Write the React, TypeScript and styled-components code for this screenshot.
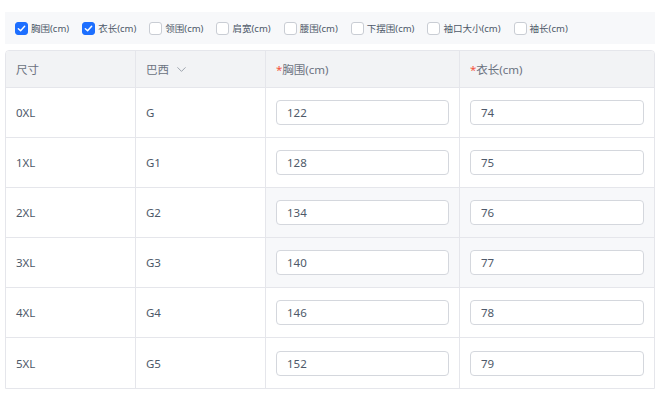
import React from 'react';
import styled, { createGlobalStyle } from 'styled-components';
import { ChevronDown } from 'lucide-react';

const GlobalStyle = createGlobalStyle`
	html, body {
		margin: 0;
		padding: 0;
		background: #ffffff;
	}

	body {
		font-family: "Noto Sans", "Noto Sans CJK SC", sans-serif;
		color: #4e5969;
	}

	* {
		box-sizing: border-box;
	}
`;

const Page = styled.div`
	width: 660px;
	padding: 12px 5px 0;
`;

const Toolbar = styled.div`
	display: flex;
	align-items: center;
	gap: 13px;
	height: 32px;
	padding-left: 10px;
	margin-bottom: 6px;
	background: #f7f8fa;
`;

const CheckItem = styled.label`
	display: flex;
	align-items: center;
	gap: 3px;
	font-size: 9.5px;
	color: #4e5969;
	white-space: nowrap;
`;

const Box = styled.span<{ $checked?: boolean }>`
	display: flex;
	align-items: center;
	justify-content: center;
	width: 13px;
	height: 13px;
	border-radius: 3px;
	border: 1px solid ${ p => p.$checked ? '#1d6fff' : '#c9cdd4' };
	background: ${ p => p.$checked ? '#1d6fff' : '#ffffff' };
`;

const Table = styled.div`
	display: grid;
	grid-template-columns: 130px 130px 194px 1fr;
	border: 1px solid #e5e6eb;
	border-radius: 4px 4px 0 0;
	overflow: hidden;
`;

const HeadCell = styled.div<{ $last?: boolean }>`
	display: flex;
	align-items: center;
	gap: 5px;
	height: 37px;
	padding: 0 10px;
	background: #f2f3f5;
	border-right: ${ p => p.$last ? 'none' : '1px solid #e5e6eb' };
	border-bottom: 1px solid #e5e6eb;
	font-size: 11.5px;
	color: #6b7280;
`;

const Required = styled.span`
	color: #f5533d;
	margin-right: -5px;
`;

const Cell = styled.div<{ $last?: boolean; $lastRow?: boolean; $shaded?: boolean }>`
	display: flex;
	align-items: center;
	height: 50px;
	padding: 0 10px;
	background: ${ p => p.$shaded ? '#f7f8fa' : '#ffffff' };
	border-right: ${ p => p.$last ? 'none' : '1px solid #e5e6eb' };
	border-bottom: ${ p => p.$lastRow ? 'none' : '1px solid #e5e6eb' };
	font-size: 11.5px;
	color: #4e5969;
`;

const Input = styled.input`
	width: 100%;
	height: 25px;
	padding: 0 10px;
	border: 1px solid #d4d7dd;
	border-radius: 4px;
	background: #ffffff;
	font-family: inherit;
	font-size: 11.5px;
	color: #4e5969;
	outline: none;
`;

const OPTIONS = [
	{ label: '胸围(cm)', checked: true },
	{ label: '衣长(cm)', checked: true },
	{ label: '领围(cm)', checked: false },
	{ label: '肩宽(cm)', checked: false },
	{ label: '腰围(cm)', checked: false },
	{ label: '下摆围(cm)', checked: false },
	{ label: '袖口大小(cm)', checked: false },
	{ label: '袖长(cm)', checked: false },
];

const ROWS = [
	{ size: '0XL', br: 'G', chest: '122', length: '74' },
	{ size: '1XL', br: 'G1', chest: '128', length: '75' },
	{ size: '2XL', br: 'G2', chest: '134', length: '76', shaded: true },
	{ size: '3XL', br: 'G3', chest: '140', length: '77', shaded: true },
	{ size: '4XL', br: 'G4', chest: '146', length: '78' },
	{ size: '5XL', br: 'G5', chest: '152', length: '79' },
];

function Check({ checked }: { checked: boolean }) {
	return (
		<Box $checked={ checked }>
			{ checked ? (
				<svg width="9" height="9" viewBox="0 0 8 8">
					<path d="M1.2 4.2 L3.2 6 L6.8 2" fill="none" stroke="#fff" strokeWidth="1.3"
						strokeLinecap="round" strokeLinejoin="round"/>
				</svg>
			) : null }
		</Box>
	);
}

export default function App() {
	return (
		<Page>
			<GlobalStyle/>
			<Toolbar>
				{ OPTIONS.map(o => (
					<CheckItem key={ o.label }>
						<Check checked={ o.checked }/>
						<span>{ o.label }</span>
					</CheckItem>
				)) }
			</Toolbar>
			<Table>
				<HeadCell>尺寸</HeadCell>
				<HeadCell>巴西 <ChevronDown size={ 15 } strokeWidth={ 1.3 } color="#8a919c"/></HeadCell>
				<HeadCell><Required>*</Required>胸围(cm)</HeadCell>
				<HeadCell $last><Required>*</Required>衣长(cm)</HeadCell>
				{ ROWS.map((r, i) => {
					const lastRow = i === ROWS.length - 1;
					return (
						<React.Fragment key={ r.size }>
							<Cell $lastRow={ lastRow }>{ r.size }</Cell>
							<Cell $lastRow={ lastRow }>{ r.br }</Cell>
							<Cell $lastRow={ lastRow } $shaded={ r.shaded }>
								<Input defaultValue={ r.chest }/>
							</Cell>
							<Cell $lastRow={ lastRow } $shaded={ r.shaded } $last>
								<Input defaultValue={ r.length }/>
							</Cell>
						</React.Fragment>
					);
				}) }
			</Table>
		</Page>
	);
}
